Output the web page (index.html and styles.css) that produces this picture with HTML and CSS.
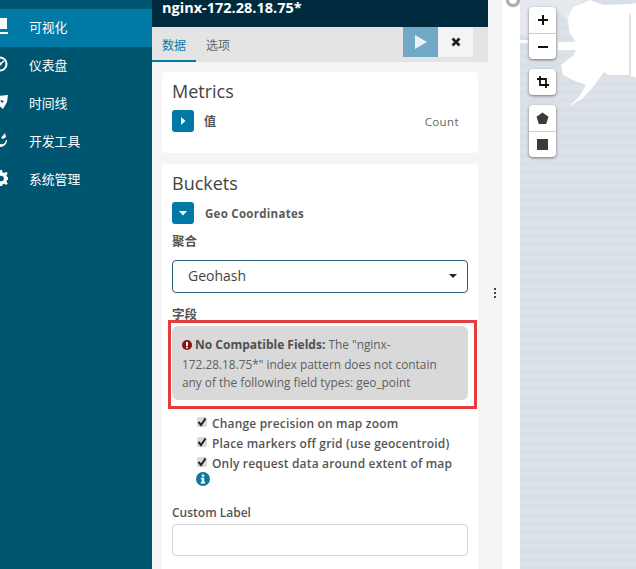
FILE: index.html
```html
<!DOCTYPE html>
<html lang="zh">
<head>
<meta charset="utf-8">
<title>Kibana</title>
<link rel="stylesheet" href="styles.css">
</head>
<body>
<div class="app">
  <nav class="sidebar">
    <a class="nav-item active"><svg class="nav-icon" viewBox="0 0 16 16"><path d="M8 0h7v11H8zM8 14h8v2H8z" fill="#fff"/></svg><span>可视化</span></a>
    <a class="nav-item"><svg class="nav-icon" viewBox="0 0 16 16"><circle cx="8" cy="8" r="6.500" fill="none" stroke="#fff" stroke-width="2"/><circle cx="8" cy="8" r="1.600" fill="#fff"/><path d="M8 8l4-3" stroke="#fff" stroke-width="1.500"/></svg><span>仪表盘</span></a>
    <a class="nav-item"><svg class="nav-icon" viewBox="0 0 16 16"><path d="M5 2l11-1-1 7-4 7-6-5z" fill="#fff"/><path d="M8 6l4 1-2 2z" fill="#005571"/></svg><span>时间线</span></a>
    <a class="nav-item"><svg class="nav-icon" viewBox="0 0 16 16"><path d="M8 12c3 1 5 0 6-4l1 0c0 4-3 7-7 7z M13 1l1 4-3 2-2-1z" fill="#fff"/></svg><span>开发工具</span></a>
    <a class="nav-item"><svg class="nav-icon" viewBox="0 0 16 16"><path d="M8 0h2l.5 2.300 1.700.7 2-1.300 1.500 1.500-1.300 2 .7 1.700 2.300.5v2l-2.300.5-.7 1.700 1.300 2-1.500 1.500-2-1.300-1.700.7L10 17H8l-.5-2.300-1.700-.7-2 1.300L2.300 13.800l1.300-2-.7-1.700L.6 9.600v-2l2.300-.5.7-1.700-1.300-2L3.800 1.900l2 1.300L7.500 2.500z" fill="#fff"/><circle cx="9" cy="8.500" r="2.800" fill="#005571"/></svg><span>系统管理</span></a>
  </nav>

  <main class="panel">
    <header class="title-bar">nginx-172.28.18.75*</header>
    <div class="tabs">
      <a class="tab tab-on">数据</a>
      <a class="tab">选项</a>
      <div class="tab-actions">
        <button class="btn-run" type="button"><svg width="14" height="14" viewBox="0 0 14 14"><path d="M1 0l12 7-12 7z" fill="#eaf2f6"/></svg></button>
        <button class="btn-close" type="button"><svg width="10" height="10" viewBox="0 0 10 10"><path d="M1.500 1.500l7 7m0-7l-7 7" stroke="#1c1c1c" stroke-width="2.600"/></svg></button>
      </div>
    </div>
    <div class="editor">
      <section class="card card-metrics">
        <h2 class="card-title">Metrics</h2>
        <div class="agg-row">
          <span class="toggle"><svg width="8" height="8" viewBox="0 0 8 8"><path d="M2 0l4.500 4L2 8z" fill="#fff"/></svg></span>
          <b class="agg-cjk">值</b>
          <span class="agg-type">Count</span>
        </div>
      </section>
      <section class="card card-buckets">
        <h2 class="card-title">Buckets</h2>
        <div class="agg-row">
          <span class="toggle"><svg width="8" height="8" viewBox="0 0 8 8"><path d="M0 2l4 4.500L8 2z" fill="#fff"/></svg></span>
          <b class="agg-name">Geo Coordinates</b>
        </div>
        <label class="field-label label-agg">聚合</label>
        <div class="select">Geohash<i class="caret"></i></div>
        <label class="field-label label-field">字段</label>
        <div class="alert">
          <svg class="alert-icon" width="10" height="10" viewBox="0 0 10 10"><circle cx="5" cy="5" r="5" fill="#8c0f0f"/><rect x="4" y="2" width="2" height="4" fill="#fff"/><rect x="4" y="6.800" width="2" height="1.500" fill="#fff"/></svg><b>No Compatible Fields:</b> The "nginx-172.28.18.75*" index pattern does not contain any of the following field types: geo_point
          <div class="callout"></div>
        </div>
        <div class="checks">
          <div class="check-row"><span class="check"><svg width="10" height="10" viewBox="0 0 10 10"><path d="M1.500 5l2.500 3L8.500 1.500" fill="none" stroke="#222" stroke-width="2"/></svg></span>Change precision on map zoom</div>
          <div class="check-row"><span class="check"><svg width="10" height="10" viewBox="0 0 10 10"><path d="M1.500 5l2.500 3L8.500 1.500" fill="none" stroke="#222" stroke-width="2"/></svg></span>Place markers off grid (use geocentroid)</div>
          <div class="check-row"><span class="check"><svg width="10" height="10" viewBox="0 0 10 10"><path d="M1.500 5l2.500 3L8.500 1.500" fill="none" stroke="#222" stroke-width="2"/></svg></span>Only request data around extent of map</div>
          <svg class="info" width="14" height="14" viewBox="0 0 14 14"><circle cx="7" cy="7" r="7" fill="#0b7aa3"/><rect x="5.800" y="2.500" width="2.400" height="2.200" fill="#fff"/><path d="M4.800 5.800h3.400v4.200h1v1.400H4.800V10h1V7.200h-1z" fill="#fff"/></svg>
        </div>
        <label class="field-label label-custom">Custom Label</label>
        <div class="text-input"></div>
      </section>
    </div>
  </main>

  <div class="divider"><i class="handle"></i></div>
  <div class="gutter"><svg class="gutter-mark" width="15" height="8" viewBox="0 0 15 8"><circle cx="8" cy="0" r="5.500" fill="none" stroke="#b0b0b0" stroke-width="3.500"/></svg></div>

  <div class="map">
    <svg class="map-land" viewBox="0 0 116 569">
      <path d="M0 0H66L53 7 48 17 49 26 42 14 30 10 22 30 30 44 10 38 0 34Z" fill="#e5e9ee"/>
      <path d="M0 40h8v3H0z" fill="#fff"/>
      <path d="M70 0L83 5 110 4 116 3V78L109 75H88L84 72 73 87 63 98 48 107 59 97 66 85 53 80 43 75 41 65 54 55 56 50H38V42H56L49 32 48 17 53 7Z" fill="#fff"/>
      <path d="M110 14V75" stroke="#c4c4c4" stroke-width="1" fill="none"/>
    </svg>
    <div class="map-controls">
      <div class="ctl-group">
        <a class="ctl"><svg width="12" height="12" viewBox="0 0 12 12"><path d="M6 1v10M1 6h10" stroke="#111" stroke-width="2"/></svg></a>
        <a class="ctl"><svg width="12" height="12" viewBox="0 0 12 12"><path d="M1 6h10" stroke="#111" stroke-width="2"/></svg></a>
      </div>
      <div class="ctl-group">
        <a class="ctl"><svg width="12" height="12" viewBox="0 0 12 12"><path d="M3 0v9h9M0 3h9v9" fill="none" stroke="#111" stroke-width="1.800"/></svg></a>
      </div>
      <div class="ctl-group">
        <a class="ctl"><svg width="13" height="13" viewBox="0 0 13 13"><path d="M6.500 .5l6 4.300-2.300 7.200H2.800L.5 4.800z" fill="#3b3b3b"/></svg></a>
        <a class="ctl"><svg width="11" height="11" viewBox="0 0 11 11"><rect width="11" height="11" fill="#3b3b3b"/></svg></a>
      </div>
    </div>
  </div>
</div>
</body>
</html>
```
FILE: styles.css
```css
* { box-sizing: border-box; }
html, body { margin: 0; height: 100%; overflow: hidden; }
body {
  font-family: "Open Sans", "Noto Sans CJK SC", sans-serif;
  color: #555;
  background: #fff;
}
.app { display: flex; height: 569px; width: 636px; overflow: hidden; }

.sidebar {
  flex: 0 0 152px;
  background: #005571;
  padding-top: 9px;
  font-family: "Noto Sans CJK SC", "Open Sans", sans-serif;
  overflow: hidden;
}
.nav-item {
  display: flex;
  align-items: center;
  gap: 21px;
  height: 38px;
  padding-bottom: 3px;
  color: #fff;
  font-size: 12.800px;
}
.nav-item.active { background: #0079a5; }
.nav-icon { width: 16px; height: 16px; margin-left: -8px; margin-top: -1px; flex: none; }

.panel { flex: 0 0 336px; background: #f5f5f5; display: flex; flex-direction: column; min-width: 0; overflow: hidden; }
.title-bar {
  flex: none;
  height: 27px;
  background: #002b3f;
  color: #fff;
  font-weight: 700;
  font-size: 14.500px;
  line-height: 16px;
  padding-left: 10px;
}
.tabs {
  flex: none;
  height: 35px;
  background: #e4e4e4;
  display: flex;
  align-items: flex-start;
  font-family: "Noto Sans CJK SC", sans-serif;
  font-size: 12px;
}
.tab { height: 35px; width: 44px; padding: 9px 0 0 10px; line-height: 18px; color: #666; }
.tab + .tab { width: auto; padding-left: 10px; }
.tab-on { color: #0a7ba6; border-bottom: 2px solid #0079a5; }
.tab-actions { margin-left: auto; margin-right: 15px; display: flex; }
.btn-run, .btn-close {
  width: 35px; height: 30px; border: 0; padding: 0;
  display: flex; align-items: center; justify-content: center;
}
.btn-run { background: #6fa9c5; }
.btn-close { background: #f4f4f4; }

.editor { padding: 10px 10px 0; display: flex; flex-direction: column; gap: 11px; }
.card { background: #fff; border-radius: 4px; padding: 0 10px; flex: none; }
.card-metrics { height: 81px; }
.card-buckets { height: 420px; position: relative; }
.card-title { margin: 0; font-weight: 400; font-size: 18px; line-height: 24px; color: #444; padding-top: 7px; height: 31px; }
.agg-row { display: flex; align-items: center; height: 22px; font-size: 12px; margin-top: 7px; }
.toggle {
  width: 22px; height: 22px; border-radius: 3px; background: #0079a5; flex: none;
  display: flex; align-items: center; justify-content: center;
}
.agg-cjk { margin-left: 10px; font-size: 12px; color: #555; }
.agg-name { margin-left: 11px; font-size: 11.500px; color: #5a5a5a; font-weight: 700; letter-spacing: .28px; }
.agg-type { margin-left: auto; margin-right: 9px; font-size: 11.500px; color: #666; letter-spacing: .4px; }

.field-label { display: block; font-weight: 600; font-size: 12.500px; line-height: 16px; color: #555; }
.label-agg { margin-top: 10px; }
.select {
  margin-top: 10px;
  height: 33px;
  width: 296px;
  border: 1px solid #2f6079;
  border-radius: 4px;
  padding-left: 15px;
  font-size: 14px;
  line-height: 30px;
  color: #444;
  position: relative;
}
.caret {
  position: absolute; right: 10px; top: 13px;
  border: 4px solid transparent; border-top: 4px solid #222; border-bottom: 0;
}
.label-field { margin-top: 14px; }
.alert {
  margin-top: 3px;
  width: 296px;
  height: 74px;
  background: #d9d9d9;
  border-radius: 6px;
  padding: 9px 10px 0;
  font-size: 11.850px;
  line-height: 18.500px;
  color: #5f5f5f;
  position: relative;
}
.alert b { color: #4f4f4f; font-size: 12px; }
.alert-icon { margin-right: 3px; vertical-align: -1px; }
.callout {
  position: absolute; left: -4px; top: -6px;
  width: 309px; height: 89px;
  border: 3px solid #e43d40;
  pointer-events: none;
}
.checks { padding-left: 25px; margin-top: 13px; }
.check-row { display: flex; align-items: center; height: 20px; font-size: 12px; font-weight: 600; color: #555; letter-spacing: .17px; }
.check {
  width: 10px; height: 10px; margin-right: 5px; flex: none; background: #d9d9d9; border-radius: 2px; margin-top: -3px;
  display: flex;
}
.info { display: block; margin: -1px 0 0 -1px; }
.label-custom { margin-top: 19px; line-height: 16px; font-size: 12px; }
.text-input { margin-top: 3px; width: 296px; height: 32px; border: 1px solid #d2d2d2; border-radius: 4px; }

.divider { flex: 0 0 14px; background: #f5f5f5; display: flex; justify-content: center; padding-top: 288px; }
.handle { width: 2px; height: 12px; background: repeating-linear-gradient(#444 0 2px, transparent 2px 4px); display: block; }
.gutter { flex: 0 0 18px; background: #fff; position: relative; overflow: hidden; }
.gutter-mark { position: absolute; left: 3px; top: 0; }

.map {
  flex: 0 0 116px;
  position: relative;
  background: repeating-linear-gradient(#d9dfe6 0 4px, #dde2e9 4px 9px);
}
.map-land { position: absolute; inset: 0; width: 116px; height: 569px; }
.map-controls { position: absolute; left: 9px; top: 7px; display: flex; flex-direction: column; gap: 10px; }
.ctl-group { width: 27px; background: #fff; border-radius: 4px; box-shadow: 0 1px 3px rgba(0,0,0,.5); }
.ctl { height: 26px; display: flex; align-items: center; justify-content: center; }
.ctl + .ctl { border-top: 1px solid #ccc; }
```
